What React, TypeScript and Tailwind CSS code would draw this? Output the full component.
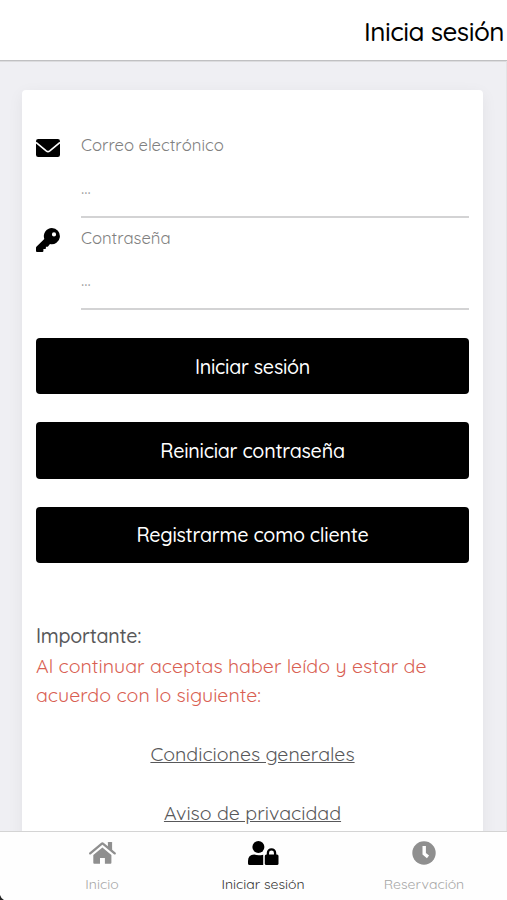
import React, { useState } from "react";

type IconProps = { className?: string };

const EnvelopeIcon = ({ className }: IconProps) => (
  <svg viewBox="0 0 24 24" className={className} fill="currentColor">
    <rect y="3" width="24" height="18" rx="2.2" />
    <path d="M0 6.4 L10.2 14.9 Q12 16.3 13.8 14.9 L24 6.4" fill="none" stroke="#fff" strokeWidth="1.6" />
  </svg>
);

const KeyIcon = ({ className }: IconProps) => (
  <svg viewBox="0 0 24 24" className={className} fill="currentColor">
    <path
      fillRule="evenodd"
      d="M15.9 0.1a8.1 8.1 0 1 1-1.9 16l-2 2.3q-.3.4-.9.4H9.9v1.4q0 .8-.8.8H7.4v1.9q0 1-1 1H1q-1 0-1-1v-3.2q0-.5.4-.9l7.9-7.9A8.1 8.1 0 0 1 15.9.1zM18 4.3a2.1 2.1 0 1 0 0 4.2a2.1 2.1 0 1 0 0-4.2z"
    />
  </svg>
);

const HomeIcon = ({ className }: IconProps) => (
  <svg viewBox="0 0 27 24" className={className} fill="currentColor">
    <path d="M13.4 6.6 L22.4 14.1 V21.8 q0 .9-.9.9 H15.9 V17 H11 V22.7 H5.2 q-.9 0-.9-.9 V14.1z" />
    <path d="M1.2 12.4 L12.6 2.8 q.8-.7 1.6 0 L25.7 12.4" fill="none" stroke="currentColor" strokeWidth="2.3" strokeLinecap="round" />
    <path d="M18.9 1.6 q0-.6.6-.6 H22.5 q.6 0 .6.6 V10.4 L18.9 7z" />
  </svg>
);

const UserLockIcon = ({ className }: IconProps) => (
  <svg viewBox="0 0 31 24" className={className} fill="currentColor">
    <circle cx="10.4" cy="6" r="6" />
    <path d="M6.2 13.6 Q10.4 15 15.2 13.7 V24 H1.6 Q0 24 0 22.4 V20 Q0 14 6.2 13.6z" />
    <rect x="16.8" y="13.5" width="13.7" height="10.5" rx="1.5" />
    <path d="M19.9 14.5 V11.9 a3.6 3.6 0 0 1 7.2 0 V14.5" fill="none" stroke="currentColor" strokeWidth="2.3" />
  </svg>
);

const ClockIcon = ({ className }: IconProps) => (
  <svg viewBox="0 0 24 24" className={className} fill="currentColor">
    <circle cx="12" cy="12" r="11.7" />
    <path d="M12.2 5 V12.8 L16 15.8" fill="none" stroke="#fff" strokeWidth="3.4" />
  </svg>
);

type FieldProps = {
  icon: React.FC<IconProps>;
  label: string;
  type: string;
};

const Field = ({ icon: Icon, label, type }: FieldProps) => {
  const [value, setValue] = useState("");
  return (
    <label className="flex h-[92.5px] gap-[21px]">
      <Icon className="mt-[10.5px] size-6 shrink-0 text-black" />
      <span className="flex grow flex-col border-b-2 border-[#d3d3d4]">
        <span className="mt-[8px] h-6 text-[16.7px] leading-6 text-[#808080]">{label}</span>
        <input
          type={type}
          value={value}
          placeholder="..."
          onChange={(e) => setValue(e.target.value)}
          className="mt-[18px] h-6 w-full text-[18px] outline-none placeholder:text-[#a0a0a0]"
        />
      </span>
    </label>
  );
};

const buttons = ["Iniciar sesión", "Reiniciar contraseña", "Registrarme como cliente"];

const tabs = [
  { text: "Inicio", icon: HomeIcon, iconClass: "h-6 w-[27px]" },
  { text: "Iniciar sesión", icon: UserLockIcon, iconClass: "h-6 w-[31px]" },
  { text: "Reservación", icon: ClockIcon, iconClass: "size-6" },
];

const App = () => {
  const [active, setActive] = useState(1);
  return (
    <div className="relative flex h-screen flex-col overflow-hidden bg-[#efeff3] font-[Quicksand,Lato,sans-serif]">
      <header className="flex h-[61px] shrink-0 items-center justify-end border-b border-[#c0c0c2] bg-white pt-[4px] pr-[3px] shadow-[0_1px_0_#dcdcde]">
        <h1 className="text-[26px] leading-8 font-medium tracking-[-0.5px] whitespace-nowrap text-black">
          Inicia sesión
        </h1>
      </header>

      <main className="min-h-0 grow overflow-hidden border-r border-[#e4e4e6] pr-[23px] pl-[22px] pt-[29px]">
        <div className="h-[900px] rounded-[4px] bg-white px-[14px] pt-[35px] shadow-[0_4px_16px_rgba(0,0,0,0.06)]">
          <Field icon={EnvelopeIcon} label="Correo electrónico" type="email" />
          <Field icon={KeyIcon} label="Contraseña" type="password" />

          <div className="mt-[28px] flex flex-col gap-[28px]">
            {buttons.map((text) => (
              <button
                key={text}
                className="h-[56.3px] rounded-[4px] bg-black pt-px text-[19.7px] font-medium tracking-[-0.25px] text-white"
              >
                {text}
              </button>
            ))}
          </div>

          <div className="mt-[58.5px] text-[19.6px] leading-[29.5px]">
            <p className="font-medium tracking-[-0.25px] text-[#58585a]">Importante:</p>
            <p className="whitespace-nowrap text-[#d95f53]">Al continuar aceptas haber leído y estar de</p>
            <p className="whitespace-nowrap text-[#d95f53]">acuerdo con lo siguiente:</p>
          </div>

          <div className="mt-[29px] flex flex-col items-center gap-[29px] text-[19.6px] leading-[30px] text-[#58585a]">
            <a href="#condiciones" className="underline">Condiciones generales</a>
            <a href="#privacidad" className="underline">Aviso de privacidad</a>
          </div>
        </div>
      </main>

      <nav className="flex h-[69px] shrink-0 border-t border-[#d4d4d4] bg-[#fefefe] pl-[21.5px]">
        {tabs.map((tab, i) => (
          <button
            key={tab.text}
            onClick={() => setActive(i)}
            className={
              "flex w-[161px] shrink-0 flex-col items-center pt-[9px] " +
              (active === i ? "text-black" : "text-[#8f8f8f]")
            }
          >
            <tab.icon className={tab.iconClass} />
            <span
              className={
                "mt-[9px] text-[14px] leading-5 " +
                (active === i ? "text-[#333333]" : "text-[#a6a6a6]")
              }
            >
              {tab.text}
            </span>
          </button>
        ))}
      </nav>

      {/* dark corner of the device frame */}
      <svg viewBox="0 0 4 5" className="absolute bottom-0 left-0 h-[5px] w-1">
        <path d="M0 0 Q1 3.5 4 5 H0z" fill="#222" />
      </svg>
    </div>
  );
};

export default App;
